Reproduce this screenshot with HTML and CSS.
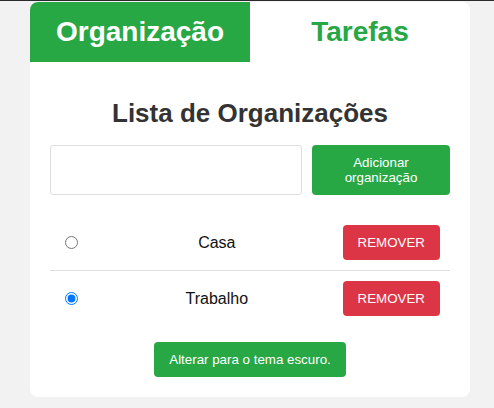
FILE: index.html
```html
<!DOCTYPE html>
<html lang="pt">
<head>
<meta charset="utf-8">
<title>Organizações</title>
<link rel="stylesheet" href="styles.css">
</head>
<body>
<div class="topbar"></div>
<main class="card">
  <nav class="tabs">
    <div class="tab active">Organização</div>
    <div class="tab">Tarefas</div>
  </nav>
  <section class="content">
    <h2 class="title">Lista de Organizações</h2>
    <div class="add-row">
      <input class="add-input" type="text">
      <button class="btn btn-green add-btn">Adicionar organização</button>
    </div>
    <ul class="list">
      <li class="item">
        <input class="radio" type="radio" name="org">
        <span class="name">Casa</span>
        <button class="btn btn-red">REMOVER</button>
      </li>
      <li class="item">
        <input class="radio" type="radio" name="org" checked>
        <span class="name">Trabalho</span>
        <button class="btn btn-red">REMOVER</button>
      </li>
    </ul>
    <div class="footer">
      <button class="btn btn-green">Alterar para o tema escuro.</button>
    </div>
  </section>
</main>
</body>
</html>
```

FILE: styles.css
```css
html, body {
  margin: 0;
  padding: 0;
}
body {
  background: #f2f2f2;
  font-family: "Liberation Sans", Arial, sans-serif;
  height: 408px;
  overflow: hidden;
}
.topbar {
  height: 1px;
  background: #2b2b2b;
}
.card {
  width: 440px;
  margin: 1px 0 0 30px;
  background: #fff;
  border-radius: 8px;
  overflow: hidden;
}
.tabs {
  display: flex;
  height: 60px;
}
.tab {
  flex: 1;
  display: flex;
  align-items: center;
  justify-content: center;
  font-size: 28px;
  font-weight: bold;
  color: #28a745;
}
.tab.active {
  background: #28a745;
  color: #fff;
}
.content {
  padding: 20px;
}
.title {
  margin: 16px 0 17px;
  font-size: 26px;
  line-height: 30px;
  text-align: center;
  color: #333;
}
.add-row {
  display: flex;
  gap: 10px;
  height: 50px;
}
.add-input {
  flex: 1;
  margin: 0;
  box-sizing: border-box;
  border: 1px solid #ddd;
  border-radius: 3px;
  height: 50px;
}
.btn {
  font-family: "Liberation Sans", Arial, sans-serif;
  font-size: 13.333px;
  color: #fff;
  border: none;
  border-radius: 4px;
  padding: 0 15px;
  height: 35px;
  cursor: pointer;
}
.btn-green {
  background: #28a745;
}
.btn-red {
  background: #dc3545;
}
.add-btn {
  width: 138px;
  height: 50px;
  line-height: 15px;
}
.list {
  list-style: none;
  margin: 20px 0 0;
  padding: 0;
}
.item {
  display: flex;
  align-items: center;
  padding: 10px 10px;
  border-bottom: 1px solid #ddd;
}
.item:last-child {
  border-bottom: none;
}
.radio {
  margin: 0 3px 0 5px;
  width: 13px;
  height: 13px;
}
.name {
  flex: 1;
  text-align: center;
  font-size: 16px;
  color: #111;
  padding-left: 10px;
}
.footer {
  display: flex;
  justify-content: center;
  margin-top: 16px;
}
```
